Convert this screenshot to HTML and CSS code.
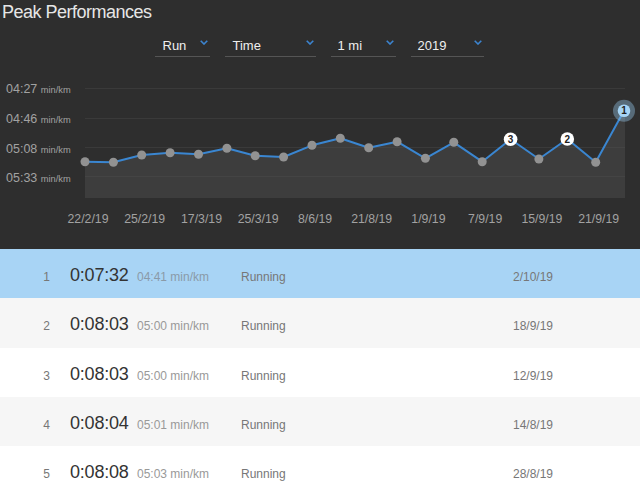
FILE: index.html
```html
<!DOCTYPE html>
<html>
<head>
<meta charset="utf-8">
<link rel="stylesheet" href="styles.css">
</head>
<body>
<section class="top">
  <h1 class="title">Peak Performances</h1>
  <div class="filters">
    <div class="select w-run"><span>Run</span><svg class="chev" width="8" height="5" viewBox="0 0 8 5"><polyline points="0.7,0.7 4,4 7.3,0.7" fill="none" stroke="#3c84d0" stroke-width="1.6"/></svg></div>
    <div class="select w-time"><span>Time</span><svg class="chev" width="8" height="5" viewBox="0 0 8 5"><polyline points="0.7,0.7 4,4 7.3,0.7" fill="none" stroke="#3c84d0" stroke-width="1.6"/></svg></div>
    <div class="select w-dist"><span>1 mi</span><svg class="chev" width="8" height="5" viewBox="0 0 8 5"><polyline points="0.7,0.7 4,4 7.3,0.7" fill="none" stroke="#3c84d0" stroke-width="1.6"/></svg></div>
    <div class="select w-year"><span>2019</span><svg class="chev" width="8" height="5" viewBox="0 0 8 5"><polyline points="0.7,0.7 4,4 7.3,0.7" fill="none" stroke="#3c84d0" stroke-width="1.6"/></svg></div>
  </div>
  <svg class="chart" width="640" height="192" viewBox="0 57 640 192">
    <g class="grid">
      <line x1="85" y1="88.5" x2="625" y2="88.5"/>
      <line x1="85" y1="118.5" x2="625" y2="118.5"/>
      <line x1="85" y1="147.5" x2="625" y2="147.5"/>
      <line x1="85" y1="176.5" x2="625" y2="176.5"/>
    </g>
    <polygon class="area" points="85,198 85,161.7 113.4,162.3 141.7,155 170.1,152.7 198.5,154.3 226.9,148.3 255.2,155.7 283.6,157 312,145.3 340.3,138.3 368.7,147.7 397.1,141.7 425.4,158.3 453.8,142.3 482.2,161.7 510.6,139.3 538.9,159 567.3,139 595.7,162.3 624,110.7 625,110.7 625,198"/>
    <g class="ylab">
      <text x="6" y="93.3">04:27 <tspan class="unit">min/km</tspan></text>
      <text x="6" y="123.3">04:46 <tspan class="unit">min/km</tspan></text>
      <text x="6" y="153">05:08 <tspan class="unit">min/km</tspan></text>
      <text x="6" y="181.7">05:33 <tspan class="unit">min/km</tspan></text>
    </g>
    <polyline class="line" points="85,161.7 113.4,162.3 141.7,155 170.1,152.7 198.5,154.3 226.9,148.3 255.2,155.7 283.6,157 312,145.3 340.3,138.3 368.7,147.7 397.1,141.7 425.4,158.3 453.8,142.3 482.2,161.7 510.6,139.3 538.9,159 567.3,139 595.7,162.3 624,110.7"/>
    <g class="dots">
      <circle cx="85" cy="161.7" r="4.5"/>
      <circle cx="113.4" cy="162.3" r="4.5"/>
      <circle cx="141.7" cy="155" r="4.5"/>
      <circle cx="170.1" cy="152.7" r="4.5"/>
      <circle cx="198.5" cy="154.3" r="4.5"/>
      <circle cx="226.9" cy="148.3" r="4.5"/>
      <circle cx="255.2" cy="155.7" r="4.5"/>
      <circle cx="283.6" cy="157" r="4.5"/>
      <circle cx="312" cy="145.3" r="4.5"/>
      <circle cx="340.3" cy="138.3" r="4.5"/>
      <circle cx="368.7" cy="147.7" r="4.5"/>
      <circle cx="397.1" cy="141.7" r="4.5"/>
      <circle cx="425.4" cy="158.3" r="4.5"/>
      <circle cx="453.8" cy="142.3" r="4.5"/>
      <circle cx="482.2" cy="161.7" r="4.5"/>
      <circle cx="538.9" cy="159" r="4.5"/>
      <circle cx="595.7" cy="162.3" r="4.5"/>
    </g>
    <g class="rank">
      <circle cx="510.6" cy="139.3" r="6.8"/>
      <text x="510.6" y="143">3</text>
      <circle cx="567.3" cy="139" r="6.8"/>
      <text x="567.3" y="142.7">2</text>
    </g>
    <g class="best">
      <circle class="halo" cx="624" cy="110.7" r="11"/>
      <circle class="core" cx="624" cy="110.7" r="6.3"/>
      <text x="624" y="114.4">1</text>
    </g>
    <g class="xlab">
      <text x="88" y="222.7">22/2/19</text>
      <text x="144.7" y="222.7">25/2/19</text>
      <text x="201.5" y="222.7">17/3/19</text>
      <text x="258.2" y="222.7">25/3/19</text>
      <text x="315" y="222.7">8/6/19</text>
      <text x="371.7" y="222.7">21/8/19</text>
      <text x="428.4" y="222.7">1/9/19</text>
      <text x="485.2" y="222.7">7/9/19</text>
      <text x="541.9" y="222.7">15/9/19</text>
      <text x="598.7" y="222.7">21/9/19</text>
    </g>
  </svg>
</section>
<section class="list">
  <div class="row selected">
    <span class="pos">1</span><span class="time">0:07:32</span><span class="pace">04:41 min/km</span><span class="type">Running</span><span class="date">2/10/19</span>
  </div>
  <div class="row alt">
    <span class="pos">2</span><span class="time">0:08:03</span><span class="pace">05:00 min/km</span><span class="type">Running</span><span class="date">18/9/19</span>
  </div>
  <div class="row">
    <span class="pos">3</span><span class="time">0:08:03</span><span class="pace">05:00 min/km</span><span class="type">Running</span><span class="date">12/9/19</span>
  </div>
  <div class="row alt">
    <span class="pos">4</span><span class="time">0:08:04</span><span class="pace">05:01 min/km</span><span class="type">Running</span><span class="date">14/8/19</span>
  </div>
  <div class="row">
    <span class="pos">5</span><span class="time">0:08:08</span><span class="pace">05:03 min/km</span><span class="type">Running</span><span class="date">28/8/19</span>
  </div>
</section>
</body>
</html>
```

FILE: styles.css
```css
* { box-sizing: border-box; }
html, body { margin: 0; padding: 0; }
body {
  font-family: "Liberation Sans", Arial, sans-serif;
  background: #ffffff;
  width: 640px;
  height: 489px;
  overflow: hidden;
}
.top {
  background: #2e2e2e;
  height: 249px;
  overflow: hidden;
}
.title {
  margin: 0;
  padding: 1px 0 0 2px;
  font-size: 18px;
  line-height: 22px;
  font-weight: normal;
  color: #e6e6e6;
  letter-spacing: -0.5px;
}
.filters {
  display: flex;
  justify-content: center;
  gap: 15px;
  margin-top: 13px;
  padding-right: 2px;
}
.select {
  display: flex;
  justify-content: space-between;
  align-items: flex-start;
  height: 21px;
  padding: 0 2px 0 8px;
  border-bottom: 1px solid #555;
  color: #eeeeee;
  font-size: 13px;
  line-height: 20px;
}
.select .chev { margin-top: 4px; display: block; }
.w-run { width: 55px; }
.w-time { width: 91px; }
.w-dist { width: 65px; padding-left: 7px; }
.w-year { width: 73px; padding-left: 7px; }
.chart { display: block; }
.grid line { stroke: #3a3a3a; stroke-width: 1; }
.area { fill: rgba(90, 90, 90, 0.35); }
.line { fill: none; stroke: #3a86d1; stroke-width: 2; stroke-linejoin: round; }
.dots circle { fill: #929292; }
.ylab text { fill: #a2a2a2; font-size: 12.5px; font-family: "Liberation Sans", Arial, sans-serif; }
.ylab .unit { font-size: 9.3px; }
.xlab text { fill: #a2a2a2; font-size: 12.3px; text-anchor: middle; font-family: "Liberation Sans", Arial, sans-serif; }
.rank circle { fill: #ffffff; }
.rank text, .best text {
  fill: #1e1e1e;
  font-size: 10px;
  font-weight: bold;
  text-anchor: middle;
  font-family: "Liberation Sans", Arial, sans-serif;
}
.best .halo { fill: rgba(150, 200, 235, 0.4); }
.best .core { fill: #a6d5f6; }
.list { display: flex; flex-direction: column; }
.row {
  display: flex;
  align-items: baseline;
  height: 49.3px;
  padding-top: 16px;
  background: #ffffff;
  color: #777;
  font-size: 12px;
}
.row.alt { background: #f6f6f6; }
.row.selected { background: #a8d4f5; }
.pos { flex: none; width: 70px; padding-right: 20px; text-align: right; color: #777; }
.time { flex: none; width: 67px; font-size: 18px; color: #333; letter-spacing: -0.2px; }
.pace { flex: none; width: 104px; color: #999; }
.row.selected .pace { color: #8a9aa8; }
.type { flex: none; width: 272px; color: #777; }
.date { color: #777; }
```
